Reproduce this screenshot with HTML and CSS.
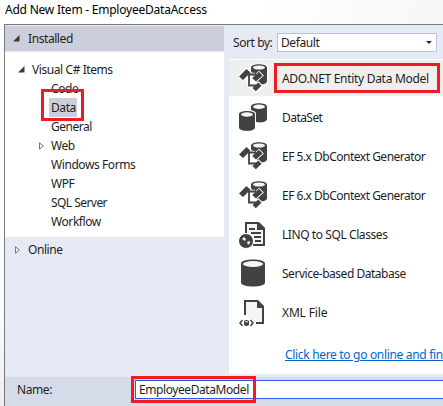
FILE: index.html
```
<!DOCTYPE html>
<html lang="en">
<head>
<meta charset="utf-8">
<title>Add New Item</title>
<link rel="stylesheet" href="styles.css">
</head>
<body>
<svg width="0" height="0" class="defs" aria-hidden="true">
  <symbol id="entity" viewBox="0 0 30 30">
    <path class="halo" d="M12 4.500C12 1 28 1 28 4.500V18L23 22V24L17 28.500 10 23.500 9.500 16H5L0 13.500 6.500 6.500 12 7Z"/>
    <path class="ink" d="M12 4.500C12 0 28 0 28 4.500V18C28 20 25.500 21.500 21 21.500L18 19 13 10 12 8Z"/>
    <ellipse class="paper" cx="20" cy="4.500" rx="6" ry="2"/>
    <path class="gap" d="M13.500 15.300 20 9.500 23 12.500 17 18ZM14 25 19.500 20 22 22.500 17 27.500ZM9 11H16"/>
    <path class="ink" d="M0 13.500 7.500 6 11.500 9.800 4 17ZM13.200 15 19.800 8.800 23.600 12.500 17 18.500ZM13.500 25 19.200 19.600 22.500 22.700 16.800 28.300Z"/>
    <path class="wire" d="M9 11.500H17M10 12V22.500H17"/>
  </symbol>
  <symbol id="cylinder" viewBox="0 0 30 30">
    <path class="ink" d="M2 5.500C2 .2 26 .2 26 5.500V24.500C26 29.800 2 29.800 2 24.500Z"/>
    <ellipse class="paper" cx="14" cy="6" rx="10.200" ry="2.900"/>
  </symbol>
  <symbol id="dataset" viewBox="0 0 30 30">
    <path class="ink" d="M12 4.500C12 0 28 0 28 4.500V17C28 20 22 21 17 20V11L12 8Z"/>
    <ellipse class="paper" cx="20" cy="4.800" rx="6" ry="2.200"/>
    <path class="halo thin" d="M0 12C0 8 16 8 16 12V25C16 29.500 0 29.500 0 25Z"/>
    <path class="ink" d="M0 12C0 8 16 8 16 12V25.500C16 30 0 30 0 25.500Z"/>
    <ellipse class="paper" cx="8" cy="12.500" rx="6" ry="2.200"/>
  </symbol>
  <symbol id="linq" viewBox="0 0 30 30">
    <path class="page" d="M7 14V4H19L25 10V26H14"/>
    <path class="ink" d="M18 3H20L26 9V11H18Z"/>
    <path class="wire" d="M10 10H16M12 14H22M15 18H22M16 22H22"/>
    <circle class="rim" cx="7" cy="22" r="7.500"/>
    <path class="paper" d="M3 20 5 18 7 20 6 22ZM8 23 11 22 11 24 9 26Z"/>
  </symbol>
  <symbol id="xml" viewBox="0 0 30 30">
    <path class="page" d="M6 18V4H18L24 10V26H17"/>
    <path class="ink" d="M18 3H19L25 9V11H18Z"/>
    <path class="mark" d="M3.500 23 1 26 3.500 29M11.500 23 14 26 11.500 29"/>
    <path class="ink" d="M5 24Q7.500 22 10 24V28Q7.500 30 5 28Z"/>
    <path class="paper" d="M6 24.300H9V25.300H6Z"/>
  </symbol>
</svg>
<div class="window">
  <header class="title"><span>Add New Item - EmployeeDataAccess</span></header>
  <div class="dialog">
    <div class="main">
      <aside class="sidebar">
        <div class="group installed"><svg class="open" viewBox="0 0 7 7"><path d="M6.500 0V6.500H0Z"/></svg><span>Installed</span></div>
        <nav class="tree">
          <div class="node root"><svg class="open" viewBox="0 0 7 7"><path d="M6.500 0V6.500H0Z"/></svg><span>Visual C# Items</span></div>
          <div class="node"><span>Code</span></div>
          <div class="node selected"><span class="pick">Data</span></div>
          <div class="node"><span class="t-general">General</span></div>
          <div class="node parent"><svg class="closed" viewBox="0 0 5 8"><path d="M.5 .8 4.300 4 .5 7.200Z"/></svg><span class="t-web">Web</span></div>
          <div class="node"><span>Windows Forms</span></div>
          <div class="node"><span>WPF</span></div>
          <div class="node"><span class="t-sql">SQL Server</span></div>
          <div class="node"><span>Workflow</span></div>
        </nav>
        <div class="group online"><svg class="closed" viewBox="0 0 5 8"><path d="M.5 .8 4.300 4 .5 7.200Z"/></svg><span>Online</span></div>
      </aside>
      <section class="content">
        <div class="sort"><span class="label">Sort by:</span><div class="select"><span>Default</span><svg class="caret" viewBox="0 0 6 3"><path d="M0 0H6L3 3Z"/></svg></div></div>
        <div class="list">
          <div class="item current"><svg class="icon"><use href="#entity"/></svg><span class="t-ado">ADO.NET Entity Data Model</span></div>
          <div class="item"><svg class="icon"><use href="#dataset"/></svg><span class="t-dataset">DataSet</span></div>
          <div class="item"><svg class="icon"><use href="#entity"/></svg><span class="t-ef">EF 5.x DbContext Generator</span></div>
          <div class="item"><svg class="icon"><use href="#entity"/></svg><span class="t-ef">EF 6.x DbContext Generator</span></div>
          <div class="item"><svg class="icon"><use href="#linq"/></svg><span>LINQ to SQL Classes</span></div>
          <div class="item"><svg class="icon"><use href="#cylinder"/></svg><span class="t-service">Service-based Database</span></div>
          <div class="item"><svg class="icon"><use href="#xml"/></svg><span class="t-xml">XML File</span></div>
          <div class="more"><a>Click here to go online and fin</a></div>
        </div>
      </section>
    </div>
    <footer class="footer"><span class="label-name">Name:</span><div class="input"><span class="t-model">EmployeeDataModel</span></div></footer>
  </div>
</div>
</body>
</html>
```
FILE: styles.css
```
*, *::before, *::after { box-sizing: border-box; }
body {
  margin: 0;
  width: 443px;
  height: 406px;
  overflow: hidden;
  background: #fcfcfc;
  color: #1e1e1e;
  font: 12px/19px "Noto Sans", "Open Sans", sans-serif;
  letter-spacing: -.42px;
  white-space: nowrap;
}
.defs { position: absolute; }
.window { height: 406px; overflow: hidden; background: linear-gradient(#fdfdfd 75%, #eee); }
.title { height: 24px; padding: 0 5px; color: #000; letter-spacing: -.23px; background: linear-gradient(100deg, #fff 55%, #f7f7f7); }
.dialog { height: 382px; margin-left: 4px; border: solid #77787c; border-width: 1px 0 0 1px; background: #e6eaf5; }
.main { display: flex; height: 352px; }
.sidebar { width: 219px; background: #e6eaf5; }
.group { display: flex; align-items: center; }
.installed { height: 27px; padding: 0 0 1px 8px; gap: 8px; background: #cccedb; border-top: 1px solid #e6eaf5; border-bottom: 1px solid #e6eaf5; }
.tree { height: 185px; padding-top: 8px; background: #fff; }
.node { position: relative; display: flex; align-items: center; height: 19px; padding-left: 46px; }
.root { padding-left: 13px; gap: 7px; }
.parent { padding-left: 34px; gap: 7px; }
.pick { width: 28px; height: 19px; margin-left: -2px; padding-left: 2px; background: #cccedb; }
.selected::after { content: ""; position: absolute; left: 36px; top: -9px; width: 43px; height: 32px; border: 3px solid #ed1c24; }
.online { height: 25px; padding-left: 10px; gap: 8px; }
.open { width: 7px; height: 7px; fill: #3c3c3c; }
.closed { width: 5px; height: 8px; fill: #fff; stroke: #666; stroke-width: .9; }
.content { flex: 1; min-width: 0; padding-left: 5px; }
.sort { display: flex; align-items: center; height: 34px; padding: 1px 0 0 4px; }
.label { width: 44px; }
.select { display: flex; align-items: center; justify-content: space-between; width: 160px; height: 19px; padding: 0 4px 1px 3px; border: 1px solid #b9bfdc; background: #fff; }
.caret { width: 6px; height: 3px; fill: #1b293e; }
.list { display: flex; flex-direction: column; gap: 3px; height: 315px; padding-top: 1px; background: #fff; overflow: hidden; }
.item { position: relative; display: flex; align-items: center; flex: none; height: 36px; padding-left: 10px; gap: 13px; }
.current { background: #efefef; }
.current::after { content: ""; position: absolute; left: 45px; top: 3px; width: 166px; height: 30px; border: 3px solid #ed1c24; }
.icon { width: 30px; height: 30px; flex: none; overflow: visible; }
.ink { fill: #424242; }
.paper { fill: #f5f5f5; }
.halo { fill: #fff; stroke: #fff; stroke-width: 3; stroke-linejoin: round; }
.thin { stroke-width: 2; }
.gap { fill: #fff; stroke: #fff; stroke-width: 2.6; }
.wire { fill: none; stroke: #424242; stroke-width: 1.8; }
.rim { fill: #424242; stroke: #fff; stroke-width: 1; }
.page { fill: #f5f5f5; stroke: #424242; stroke-width: 2; }
.mark { fill: none; stroke: #424242; stroke-width: 1.5; }
.t-general, .t-web { letter-spacing: -.5px; }
.t-sql, .t-dataset { letter-spacing: -.55px; }
.t-ado { letter-spacing: -.3px; }
.t-ef { letter-spacing: -.5px; }
.t-service { letter-spacing: -.47px; }
.t-xml { letter-spacing: -.15px; }
.t-model { letter-spacing: -.42px; }
.more { padding: 12px 0 0 56px; line-height: 20px; letter-spacing: -.32px; }
.more a { color: #0066cc; text-decoration: underline; }
.footer { display: flex; align-items: center; height: 29px; padding-left: 12px; background: #d6dbe9; }
.label-name { width: 118px; margin-top: -4px; }
.input { position: relative; flex: 1; height: 19px; margin-top: -4px; padding-left: 3px; border: 1px solid #3355ee; border-right: 0; background: #fff; line-height: 17px; }
.input::after { content: ""; position: absolute; left: -5px; top: -5px; width: 125px; height: 27px; border: 3px solid #ed1c24; }
```
